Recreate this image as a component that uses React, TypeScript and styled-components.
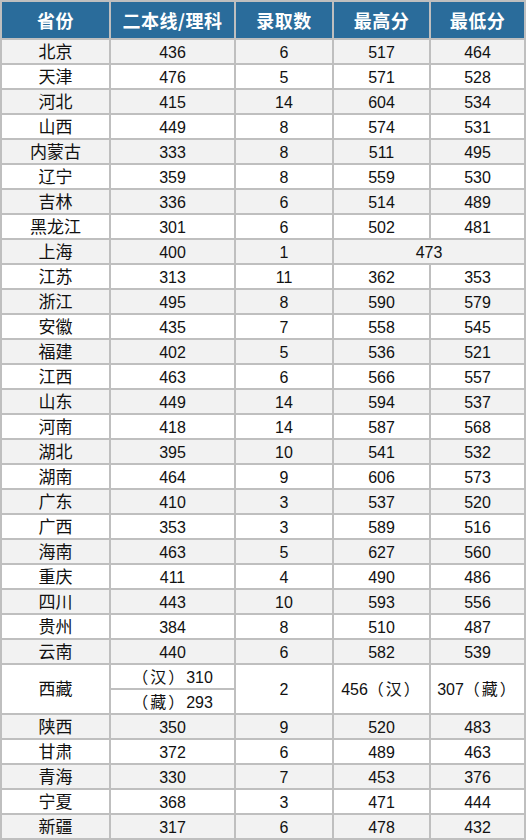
import React from "react";
import styled, { createGlobalStyle } from "styled-components";

const GlobalStyle = createGlobalStyle`
  html, body { margin: 0; padding: 0; background: #ffffff; }
  body { font-family: "Liberation Sans", "Noto Sans CJK SC", sans-serif; }
`;

const Table = styled.table`
  border-collapse: collapse;
  table-layout: fixed;
  width: 524px;
  margin: 0;
  font-family: "Liberation Sans", "Noto Sans CJK SC", sans-serif;
  font-size: 16px;
  color: #111111;
`;

const HeadRow = styled.tr`
  height: 38px;
  background: #2a6c9b;
`;

const HeadCell = styled.th`
  border: 2px solid #bfbfbf;
  color: #ffffff;
  font-weight: bold;
  font-size: 18px;
  font-family: "Noto Sans CJK SC", "Liberation Sans", sans-serif;
  text-align: center;
  padding: 0;
  letter-spacing: 0.5px;
`;

const Row = styled.tr<{ $shade: boolean }>`
  height: 25px;
  background: ${(p) => (p.$shade ? "#f2f2f2" : "#ffffff")};
`;

const Cell = styled.td<{ $cjk?: boolean }>`
  border: 2px solid #bfbfbf;
  text-align: center;
  vertical-align: middle;
  padding: 2px 0 0 0;
  line-height: 20px;
  height: 19px;
  white-space: nowrap;
  font-size: ${(p) => (p.$cjk ? "17px" : "16px")};
`;

const Wide = styled.span`
  font-family: "Noto Sans CJK SC", sans-serif;
  font-feature-settings: "fwid" 1;
  letter-spacing: 2px;
  line-height: 10px;
`;

type R = [string, string, string, string, string | null];

const rows: R[] = [
  ["北京", "436", "6", "517", "464"],
  ["天津", "476", "5", "571", "528"],
  ["河北", "415", "14", "604", "534"],
  ["山西", "449", "8", "574", "531"],
  ["内蒙古", "333", "8", "511", "495"],
  ["辽宁", "359", "8", "559", "530"],
  ["吉林", "336", "6", "514", "489"],
  ["黑龙江", "301", "6", "502", "481"],
  ["上海", "400", "1", "473", null],
  ["江苏", "313", "11", "362", "353"],
  ["浙江", "495", "8", "590", "579"],
  ["安徽", "435", "7", "558", "545"],
  ["福建", "402", "5", "536", "521"],
  ["江西", "463", "6", "566", "557"],
  ["山东", "449", "14", "594", "537"],
  ["河南", "418", "14", "587", "568"],
  ["湖北", "395", "10", "541", "532"],
  ["湖南", "464", "9", "606", "573"],
  ["广东", "410", "3", "537", "520"],
  ["广西", "353", "3", "589", "516"],
  ["海南", "463", "5", "627", "560"],
  ["重庆", "411", "4", "490", "486"],
  ["四川", "443", "10", "593", "556"],
  ["贵州", "384", "8", "510", "487"],
  ["云南", "440", "6", "582", "539"],
];

const after: R[] = [
  ["陕西", "350", "9", "520", "483"],
  ["甘肃", "372", "6", "489", "463"],
  ["青海", "330", "7", "453", "376"],
  ["宁夏", "368", "3", "471", "444"],
  ["新疆", "317", "6", "478", "432"],
];

const renderRow = (r: R, shade: boolean) => (
  <Row key={r[0]} $shade={shade}>
    <Cell $cjk>{r[0]}</Cell>
    <Cell>{r[1]}</Cell>
    <Cell>{r[2]}</Cell>
    {r[4] === null ? (
      <Cell colSpan={2}>{r[3]}</Cell>
    ) : (
      <>
        <Cell>{r[3]}</Cell>
        <Cell>{r[4]}</Cell>
      </>
    )}
  </Row>
);

export default function App() {
  return (
    <>
      <GlobalStyle />
      <Table>
        <colgroup>
          <col style={{ width: 109 }} />
          <col style={{ width: 125 }} />
          <col style={{ width: 98 }} />
          <col style={{ width: 97 }} />
          <col style={{ width: 95 }} />
        </colgroup>
        <thead>
          <HeadRow>
            <HeadCell>省份</HeadCell>
            <HeadCell>二本线/理科</HeadCell>
            <HeadCell>录取数</HeadCell>
            <HeadCell>最高分</HeadCell>
            <HeadCell>最低分</HeadCell>
          </HeadRow>
        </thead>
        <tbody>
          {rows.map((r, i) => renderRow(r, i % 2 === 0))}
          <Row $shade={false}>
            <Cell $cjk rowSpan={2}>西藏</Cell>
            <Cell><Wide>（汉）</Wide>310</Cell>
            <Cell rowSpan={2}>2</Cell>
            <Cell rowSpan={2}>456<Wide>（汉）</Wide></Cell>
            <Cell rowSpan={2}>307<Wide>（藏）</Wide></Cell>
          </Row>
          <Row $shade={false}>
            <Cell><Wide>（藏）</Wide>293</Cell>
          </Row>
          {after.map((r, i) => renderRow(r, i % 2 === 0))}
        </tbody>
      </Table>
    </>
  );
}
